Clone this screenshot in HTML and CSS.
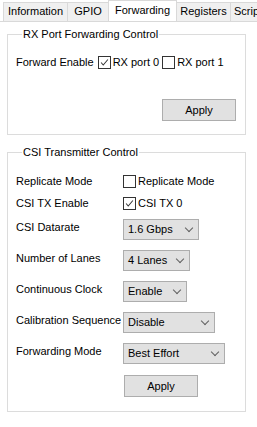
FILE: index.html
```html
<!DOCTYPE html>
<html lang="en">
<head>
  <meta charset="UTF-8" />
  <title>Forwarding</title>
  <link rel="stylesheet" href="styles.css">
</head>
<body>
  <div class="tabs">
    <div class="tab tab-info">Information</div>
    <div class="tab tab-gpio">GPIO</div>
    <div class="tab tab-fwd active">Forwarding</div>
    <div class="tab tab-reg">Registers</div>
    <div class="tab tab-scr">Scripts</div>
  </div>

  <div class="page">
    <fieldset class="group group-rx">
      <legend>RX Port Forwarding Control</legend>
      <div class="fwd-row">
        <span class="fwd-label">Forward Enable</span>
        <label class="check"><span class="box checked"><svg viewBox="0 0 13 13"><polyline points="2.5,6.5 5,9.5 10.5,3"/></svg></span>RX port 0</label>
        <label class="check"><span class="box"></span>RX port 1</label>
      </div>
      <div class="btn-row">
        <button class="btn btn-rx">Apply</button>
      </div>
    </fieldset>

    <fieldset class="group group-csi">
      <legend>CSI Transmitter Control</legend>
      <div class="row row-check">
        <span class="label">Replicate Mode</span>
        <label class="check"><span class="box"></span>Replicate Mode</label>
      </div>
      <div class="row row-check">
        <span class="label">CSI TX Enable</span>
        <label class="check"><span class="box checked"><svg viewBox="0 0 13 13"><polyline points="2.5,6.5 5,9.5 10.5,3"/></svg></span>CSI TX 0</label>
      </div>
      <div class="row row-combo">
        <span class="label">CSI Datarate</span>
        <div class="combo w-rate">1.6 Gbps<span class="arrow"></span></div>
      </div>
      <div class="row row-combo">
        <span class="label">Number of Lanes</span>
        <div class="combo w-lanes">4 Lanes<span class="arrow"></span></div>
      </div>
      <div class="row row-combo">
        <span class="label">Continuous Clock</span>
        <div class="combo w-clock">Enable<span class="arrow"></span></div>
      </div>
      <div class="row row-combo">
        <span class="label">Calibration Sequence</span>
        <div class="combo w-calib">Disable<span class="arrow"></span></div>
      </div>
      <div class="row row-combo">
        <span class="label">Forwarding Mode</span>
        <div class="combo w-mode">Best Effort<span class="arrow"></span></div>
      </div>
      <div class="csi-apply">
        <button class="btn">Apply</button>
      </div>
    </fieldset>
  </div>
</body>
</html>
```

FILE: styles.css
```css
body {
  margin: 0;
  background: #fff;
  color: #000;
  font-family: 'Liberation Sans', Arial, sans-serif;
  font-size: 11px;
  overflow: hidden;
}

/* Tabs */
.tabs {
  display: flex;
  align-items: flex-end;
  height: 21px;
  padding-left: 3px;
  border-bottom: 1px solid #d9d9d9;
  white-space: nowrap;
  overflow: hidden;
}

.tab {
  box-sizing: border-box;
  height: 19px;
  line-height: 17px;
  text-align: center;
  background: #f0f0f0;
  border: 1px solid #d9d9d9;
  border-bottom: none;
  margin-right: -1px;
  flex-shrink: 0;
}

.tab-info { width: 65px; }
.tab-gpio { width: 42px; }
.tab-fwd { width: 69px; }
.tab-reg { width: 55px; }
.tab-scr { width: 50px; text-align: left; padding-left: 3px; }

.tab.active {
  height: 22px;
  line-height: 19px;
  margin-bottom: -1px;
  background: #fff;
  position: relative;
  z-index: 1;
}

/* Group boxes */
.page {
  padding: 6px 0 0 7px;
}

.group {
  box-sizing: border-box;
  width: 239px;
  margin: 0;
  padding: 0;
  border: 1px solid #dcdcdc;
}

.group legend {
  margin-left: 6px;
  padding: 0 1px;
  line-height: 13px;
}

.group-rx {
  padding: 14px 0 13px 8px;
}

.group-csi {
  margin-top: 11px;
  padding: 11px 0 14px 8px;
}

.fwd-row {
  display: flex;
  align-items: center;
  height: 14px;
}

.fwd-label {
  margin-right: 4px;
}

.fwd-row .check {
  margin-right: 3px;
}

.btn-row {
  display: flex;
  justify-content: flex-end;
  margin-top: 30px;
  padding-right: 9px;
}

.check {
  display: flex;
  align-items: center;
}

.box {
  box-sizing: border-box;
  width: 13px;
  height: 13px;
  border: 1px solid #333;
  background: #fff;
  margin-right: 2px;
}

.box svg {
  display: block;
  width: 11px;
  height: 11px;
  margin: 0;
}

.box polyline {
  fill: none;
  stroke: #333;
  stroke-width: 1.2;
}

.btn {
  box-sizing: border-box;
  width: 74px;
  height: 22px;
  padding: 0;
  background: #e1e1e1;
  border: 1px solid #adadad;
  border-radius: 0;
  font: inherit;
  color: #000;
}

/* CSI rows */
.row {
  display: flex;
  align-items: center;
}

.row-check { height: 22px; }
.row-combo { height: 31px; }

.label {
  width: 107px;
  flex-shrink: 0;
  white-space: nowrap;
}

.row-combo .label {
  margin-bottom: 6px;
}

.combo {
  box-sizing: border-box;
  position: relative;
  height: 21px;
  line-height: 19px;
  padding-left: 4px;
  background: #e1e1e1;
  border: 1px solid #adadad;
}

.arrow {
  position: absolute;
  right: 6px;
  top: 5px;
  width: 5px;
  height: 5px;
  border-right: 1px solid #606060;
  border-bottom: 1px solid #606060;
  transform: rotate(45deg);
}

.w-rate { width: 76px; }
.w-lanes { width: 67px; }
.w-clock { width: 64px; }
.w-calib { width: 92px; }
.w-mode { width: 102px; }

.csi-apply {
  margin-top: 6px;
  padding-left: 108px;
}
```
